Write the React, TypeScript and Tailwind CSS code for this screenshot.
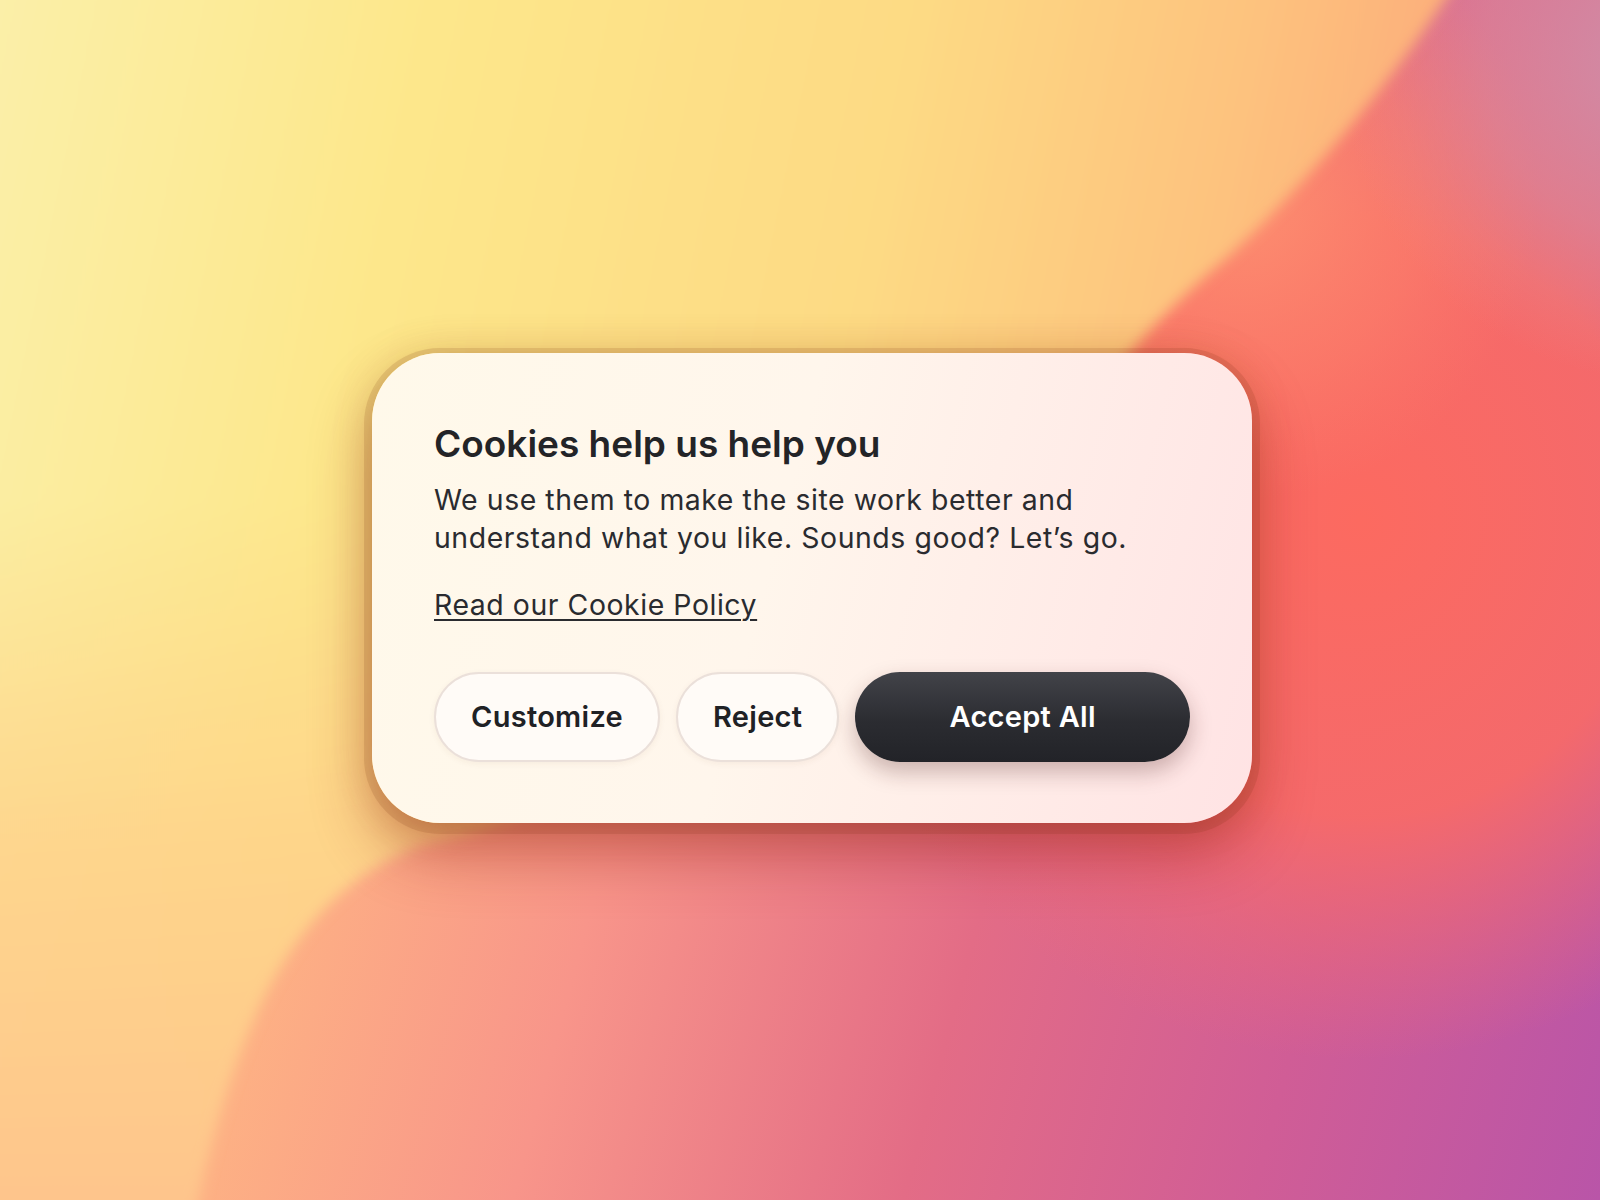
import React from "react";

const Wallpaper: React.FC = () => (
  <svg
    viewBox="0 0 1600 1200"
    preserveAspectRatio="none"
    className="absolute inset-0 h-full w-full"
  >
    <defs>
      <linearGradient id="base" x1="300" y1="850" x2="1600" y2="1200" gradientUnits="userSpaceOnUse">
        <stop offset="0" stopColor="#fdb084" />
        <stop offset="0.22" stopColor="#f8958a" />
        <stop offset="0.5" stopColor="#e36c86" />
        <stop offset="0.75" stopColor="#d05d96" />
        <stop offset="1" stopColor="#b955a8" />
      </linearGradient>
      <radialGradient id="coral" cx="1360" cy="520" r="540" gradientUnits="userSpaceOnUse">
        <stop offset="0" stopColor="#fc6a60" stopOpacity="1" />
        <stop offset="0.55" stopColor="#f96b66" stopOpacity="0.9" />
        <stop offset="1" stopColor="#f06c74" stopOpacity="0" />
      </radialGradient>
      <radialGradient id="orange" cx="1240" cy="200" r="300" gradientUnits="userSpaceOnUse">
        <stop offset="0" stopColor="#fd9070" stopOpacity="1" />
        <stop offset="0.6" stopColor="#fc806a" stopOpacity="0.6" />
        <stop offset="1" stopColor="#fb7a68" stopOpacity="0" />
      </radialGradient>
      <radialGradient id="mauve" cx="1660" cy="60" r="320" gradientUnits="userSpaceOnUse">
        <stop offset="0" stopColor="#cf8ea8" stopOpacity="1" />
        <stop offset="0.55" stopColor="#dc8a98" stopOpacity="0.65" />
        <stop offset="1" stopColor="#e88a8a" stopOpacity="0" />
      </radialGradient>
      <linearGradient id="yellow" x1="0" y1="0" x2="1480" y2="300" gradientUnits="userSpaceOnUse">
        <stop offset="0" stopColor="#fbefa8" />
        <stop offset="0.28" stopColor="#fde78b" />
        <stop offset="0.6" stopColor="#fdda84" />
        <stop offset="0.82" stopColor="#fdc27e" />
        <stop offset="1" stopColor="#fca678" />
      </linearGradient>
      <linearGradient id="peach" x1="0" y1="500" x2="0" y2="1200" gradientUnits="userSpaceOnUse">
        <stop offset="0" stopColor="#fed58a" stopOpacity="0" />
        <stop offset="0.5" stopColor="#fed08a" stopOpacity="0.8" />
        <stop offset="1" stopColor="#fec58c" stopOpacity="1" />
      </linearGradient>
      <filter id="soft" x="-10%" y="-10%" width="120%" height="120%">
        <feGaussianBlur stdDeviation="7" />
      </filter>
    </defs>
    <rect width="1600" height="1200" fill="url(#base)" />
    <rect width="1600" height="1200" fill="url(#coral)" />
    <rect width="1600" height="1200" fill="url(#orange)" />
    <rect width="1600" height="1200" fill="url(#mauve)" />
    <g filter="url(#soft)">
      <path
        d="M-40,-40 L1470,-40 C1410,60 1320,170 1230,255 C1170,305 1120,360 1080,420 C900,640 650,795 420,845 C310,890 240,985 190,1240 L-40,1240 Z"
        fill="url(#yellow)"
      />
      <path
        d="M-40,-40 L1470,-40 C1410,60 1320,170 1230,255 C1170,305 1120,360 1080,420 C900,640 650,795 420,845 C310,890 240,985 190,1240 L-40,1240 Z"
        fill="url(#peach)"
      />
    </g>
  </svg>
);

const CookieCard: React.FC = () => (
  <div className="relative ml-[24px] mb-[24px] w-[880px] rounded-[68px] bg-[linear-gradient(105deg,#fff9ea_0%,#fff6ec_45%,#ffe3e4_100%)] px-[62px] pt-[69px] pb-[61px] shadow-[0_3px_0_8px_rgba(110,40,10,0.13),0_30px_60px_rgba(150,30,20,0.45),0_0_40px_rgba(150,100,0,0.18)]">
    <h1 className="text-[37px] leading-[44px] font-semibold tracking-normal text-[#232427]">
      Cookies help us help you
    </h1>
    <p className="mt-[15px] text-[28.4px] leading-[38px] tracking-[0.02em] text-[#2a2b2f]">
      We use them to make the site work better and understand what you like. Sounds good? Let’s go.
    </p>
    <a
      href="#"
      className="mt-[29px] block w-fit text-[28.4px] leading-[38px] tracking-[0.02em] text-[#2a2b2f] underline decoration-[2px] underline-offset-[4px]"
    >
      Read our Cookie Policy
    </a>
    <div className="mt-[48px] flex gap-[16px]">
      <button className="h-[90px] rounded-full border-2 border-[#ebe0da] bg-[#fffbf7] px-[35px] text-[29px] font-semibold tracking-[0.01em] text-[#202125] shadow-[0_2px_6px_rgba(120,60,40,0.06)]">
        Customize
      </button>
      <button className="h-[90px] rounded-full border-2 border-[#ebe0da] bg-[#fffbf7] px-[35px] text-[29px] font-semibold tracking-[0.01em] text-[#202125] shadow-[0_2px_6px_rgba(120,60,40,0.06)]">
        Reject
      </button>
      <button className="h-[90px] flex-1 rounded-full bg-[linear-gradient(180deg,#424349_0%,#2b2c31_55%,#222328_100%)] text-[29px] font-semibold tracking-[0.01em] text-white shadow-[0_10px_22px_rgba(70,20,20,0.28)]">
        Accept All
      </button>
    </div>
  </div>
);

export default function App() {
  return (
    <div
      className="relative flex h-[1200px] w-full items-center justify-center overflow-hidden"
      style={{ fontFamily: "Inter, 'Noto Sans', sans-serif" }}
    >
      <Wallpaper />
      <CookieCard />
    </div>
  );
}
